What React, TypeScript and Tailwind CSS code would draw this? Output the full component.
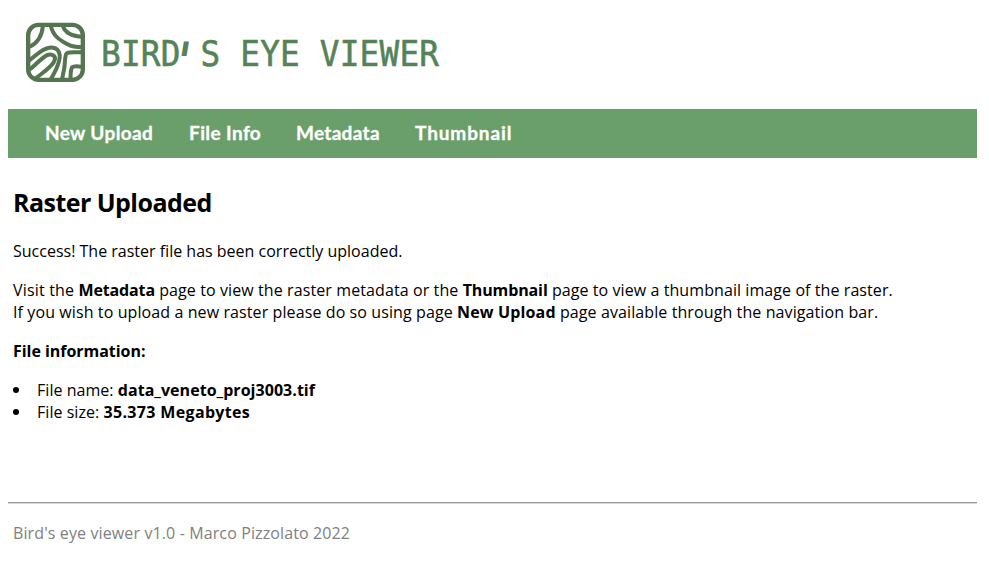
const NAV_ITEMS = [
  { label: "New Upload", className: "w-[144px] tracking-[0.38px]" },
  { label: "File Info", className: "w-[107px] tracking-[0.4px]" },
  { label: "Metadata", className: "w-[119px] tracking-[0.3px]" },
  { label: "Thumbnail", className: "w-[100px] tracking-[0.9px]" },
];

function Logo() {
  return (
    <svg viewBox="0 0 216 216" className="h-[72px] w-[72px] shrink-0" fill="none" stroke="#557550" strokeWidth="12" strokeLinejoin="round">
      <rect x="24.500" y="26.500" width="164" height="165" rx="31" strokeWidth="13" />
      <path d="M69 28C66 62 53 82 27 93" />
      <path d="M92 28C99 61 120 72 143 85C153 91 169 94 188 94" />
      <path d="M128 28C134 48 153 61 188 62" />
      <path d="M26 134C49 120 63 98 88 95C115 93 124 111 117 136C112 155 102 174 92 190" />
      <path d="M28 161C47 148 59 130 78 119C97 110 112 121 101 139C89 157 68 170 46 188" />
      <path d="M188 108C166 110 149 106 140 112C133 119 136 145 132 161C130 173 127 180 127 190" />
      <path d="M152 190C151 174 152 164 156 154C163 148 175 151 188 153" />
    </svg>
  );
}

export default function App() {
  return (
    <div className="h-[568px] w-full overflow-hidden bg-white pl-2 pr-3 font-['Open_Sans',sans-serif] text-[16px] leading-[22px] text-black">
      <header className="flex h-[109px] items-start pl-3 pt-4">
        <Logo />
        <h1 className="ml-[9px] mt-[14px] origin-left scale-x-[0.92] whitespace-nowrap font-['DejaVu_Sans_Mono',monospace] text-[35.5px] leading-[48px] tracking-[0.25px] text-[#558358] [-webkit-text-stroke:0.6px_#558358]">
          BIRD<span className="relative left-[-3px] top-[1px] inline-block origin-top -skew-x-12 scale-y-[1.2] [-webkit-text-stroke:2.4px_#558358]">'</span>S EYE VIEWER
        </h1>
      </header>

      <nav className="flex h-[49px] items-center bg-[#6a9f6b] pb-px pl-[37px] font-['Lato',sans-serif] text-[19px] font-bold text-white [-webkit-text-stroke:0.3px_white]">
        {NAV_ITEMS.map((item) => (
          <a key={item.label} className={`${item.className} whitespace-nowrap`}>{item.label}</a>
        ))}
      </nav>

      <main className="h-[344px] whitespace-nowrap pl-[5px] pt-[28px]">
        <h2 className="text-[25px] font-bold leading-[32px] tracking-[-0.54px]">Raster Uploaded</h2>
        <p className="mt-[22px]">Success! The raster file has been correctly uploaded.</p>
        <p className="mt-[17px] tracking-[0.1px]">
          <span className="tracking-[0.18px]">Visit the </span><b className="tracking-[-0.15px]">Metadata</b> page to view the raster metadata or the <b className="tracking-[-0.12px]">Thumbnail</b><span className="tracking-[0.08px]"> page to view a thumbnail image of the raster.</span>
          <br />
          If you wish to upload a new raster please do so using page <b className="tracking-[0.15px]">New Upload</b> page available through the navigation bar.
        </p>
        <p className="mt-[17px] font-bold tracking-[-0.04px]">File information:</p>
        <ul className="mt-[17px] tracking-[0.04px]">
          <li className="flex items-center"><i className="mr-[18px] h-[6px] w-[6px] rounded-full bg-black" /><span>File name: <b>data_veneto_proj3003.tif</b></span></li>
          <li className="flex items-center"><i className="mr-[18px] h-[6px] w-[6px] rounded-full bg-black" /><span>File size: <b className="tracking-[0.34px]">35.373 Megabytes</b></span></li>
        </ul>
      </main>

      <div className="h-[2px] border-b border-t border-b-[#d8d8d8] border-t-[#9a9a9a]" />
      <footer className="pl-[5px] pt-[18px] tracking-[0.12px] text-[#808080]">
        Bird's eye viewer v1.0 - Marco Pizzolato 2022
      </footer>
    </div>
  );
}
